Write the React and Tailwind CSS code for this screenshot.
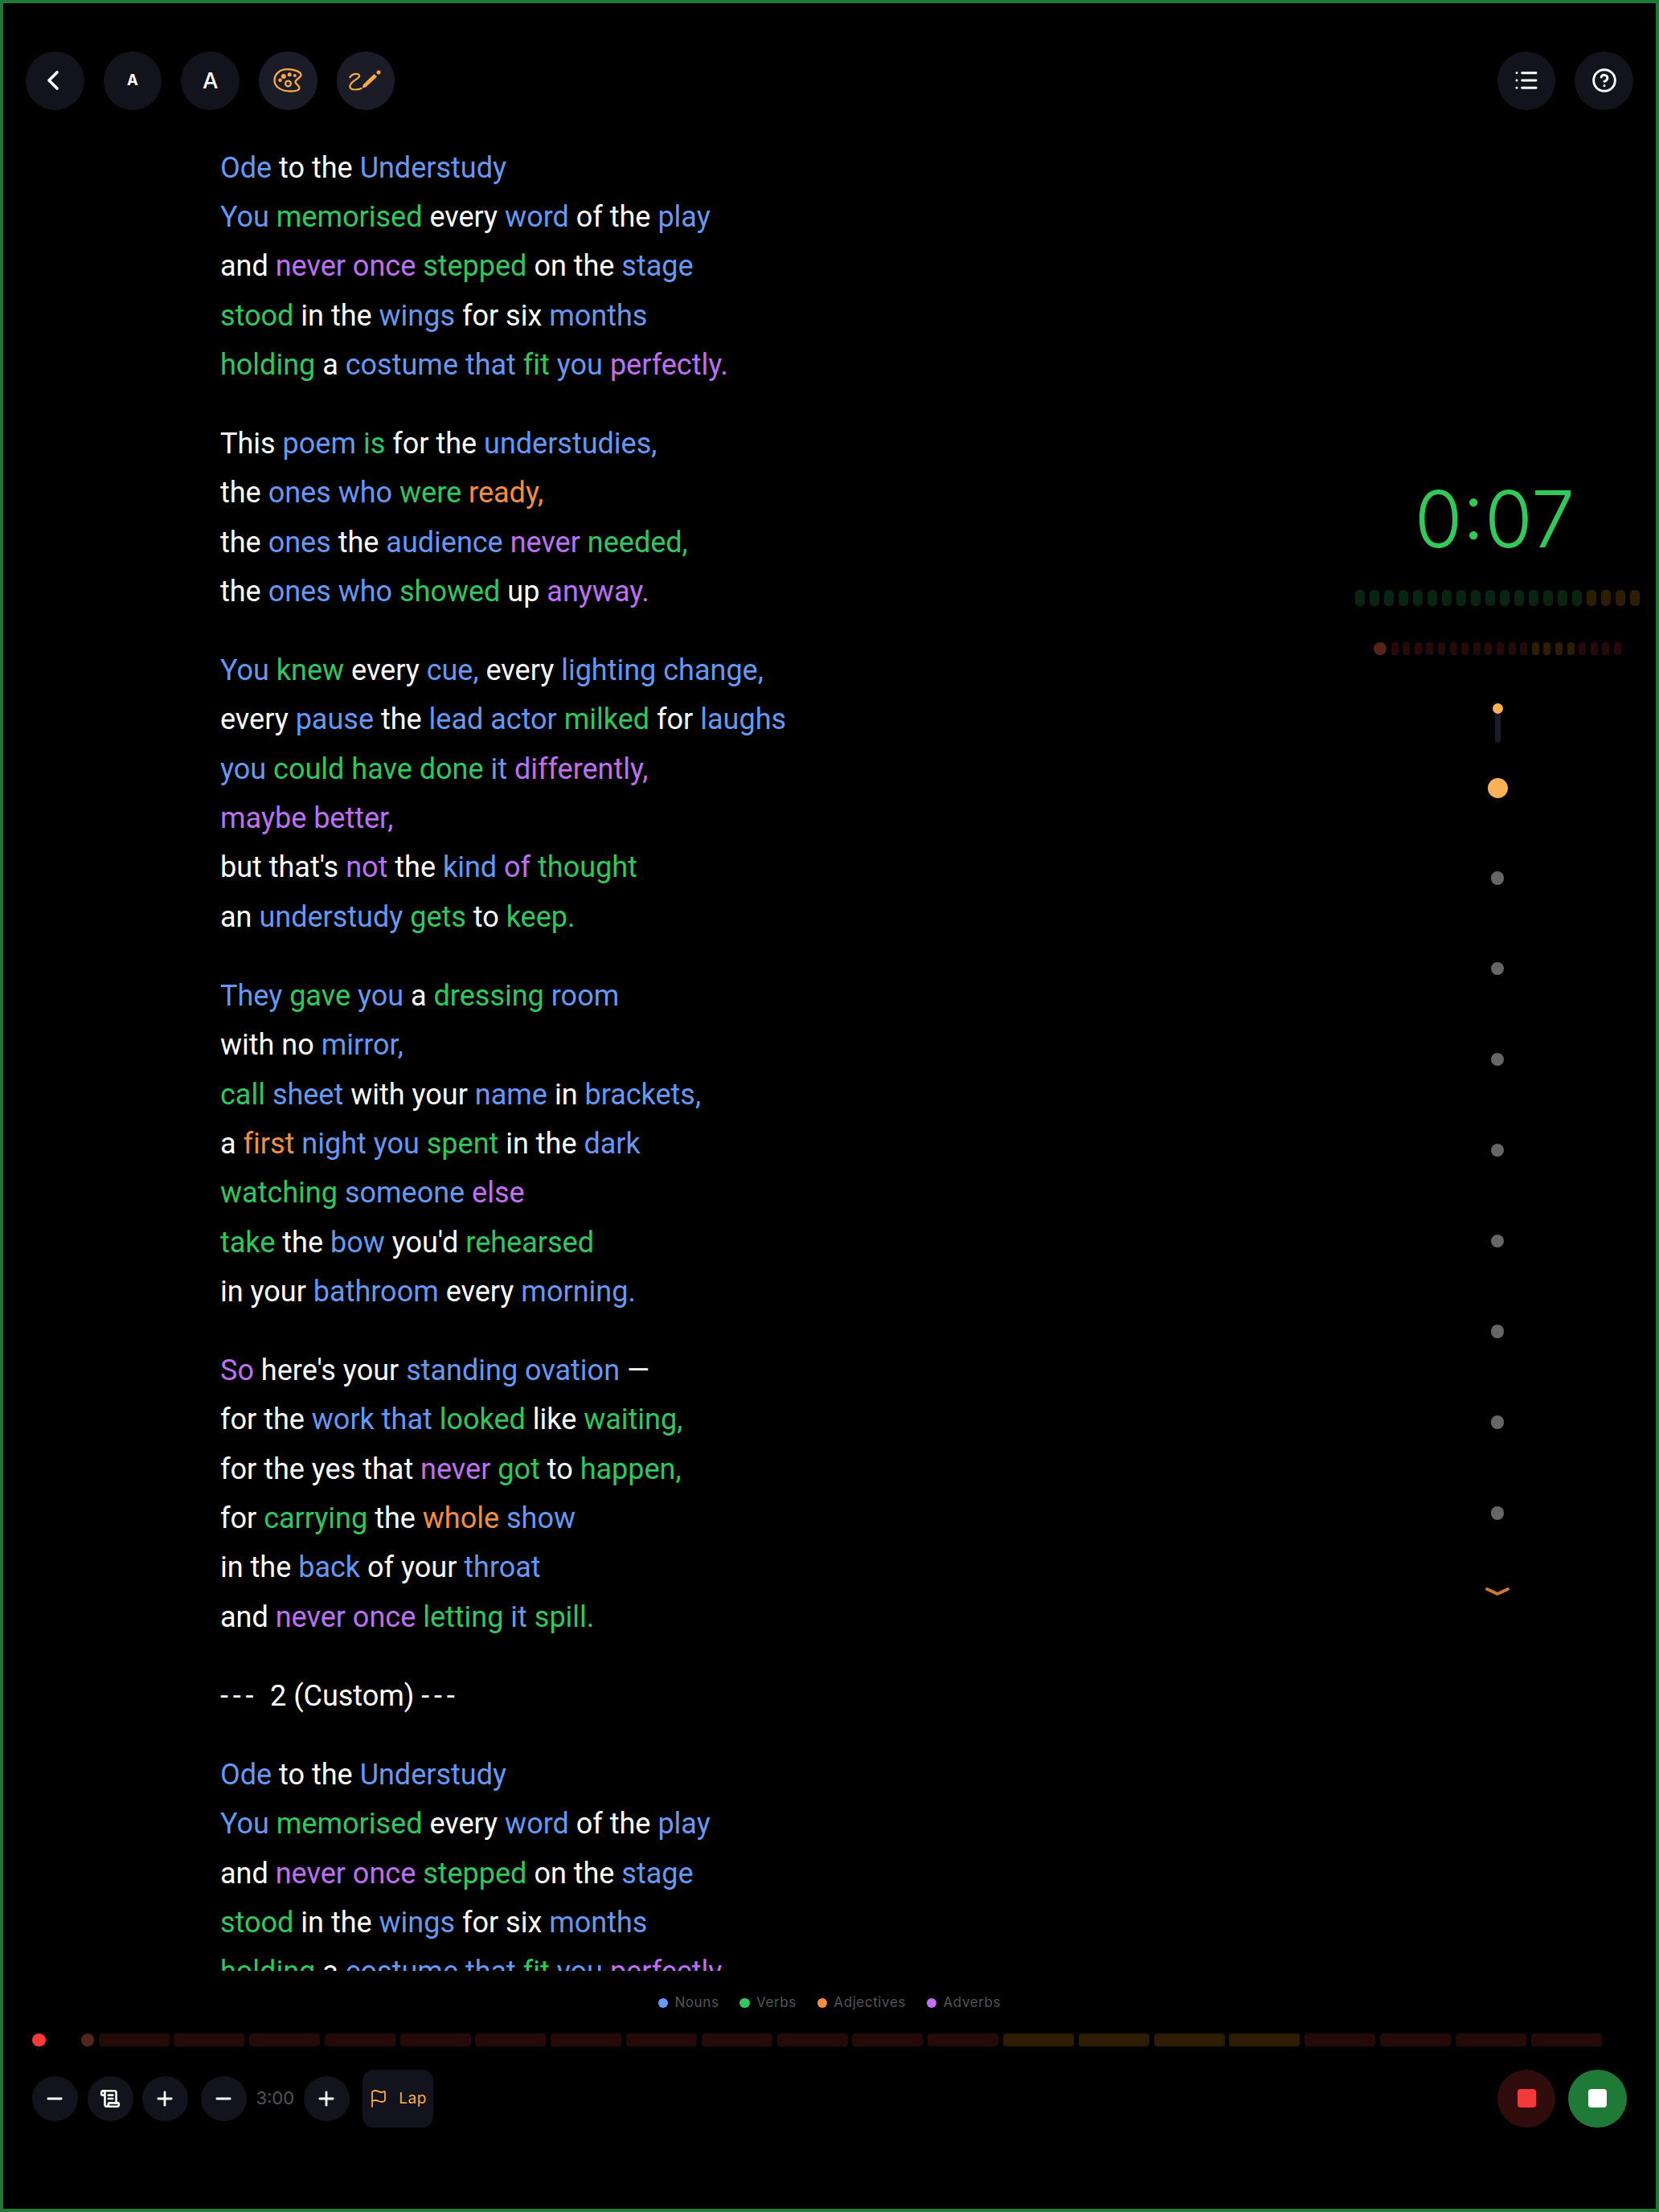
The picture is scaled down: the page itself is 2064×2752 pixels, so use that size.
import React from 'react';
import { ChevronLeft, List, CircleHelp, Minus, Plus, ScrollText, Flag } from 'lucide-react';

const n = 'text-[#6699f5]', v = 'text-[#30c85c]', a = 'text-[#f58e3f]', d = 'text-[#bf70f2]', w = 'text-white', h = 'text-white tracking-[5.800px]';
const C = { n, v, a, d, w, h };
const poem = `n:Ode w:to the n:Understudy
n:You v:memorised w:every n:word w:of the n:play
w:and d:never once v:stepped w:on the n:stage
v:stood w:in the n:wings w:for six n:months
v:holding w:a n:costume that v:fit n:you d:perfectly.

w:This n:poem v:is w:for the n:understudies,
w:the n:ones who v:were a:ready,
w:the n:ones w:the n:audience d:never v:needed,
w:the n:ones who v:showed w:up d:anyway.

n:You v:knew w:every n:cue, w:every n:lighting change,
w:every n:pause w:the n:lead actor v:milked w:for n:laughs
n:you v:could have done n:it d:differently,
d:maybe better,
w:but that's d:not w:the n:kind d:of v:thought
w:an n:understudy v:gets w:to v:keep.

n:They v:gave n:you w:a v:dressing n:room
w:with no n:mirror,
v:call n:sheet w:with your n:name w:in n:brackets,
w:a a:first n:night you v:spent w:in the n:dark
v:watching n:someone d:else
v:take w:the n:bow w:you'd v:rehearsed
w:in your n:bathroom w:every n:morning.

d:So w:here's your n:standing ovation w:—
w:for the n:work that v:looked w:like v:waiting,
w:for the yes that d:never v:got w:to v:happen,
w:for v:carrying w:the a:whole n:show
w:in the n:back w:of your n:throat
w:and d:never once v:letting n:it v:spill.

h:--- w:2 (Custom) h:---

n:Ode w:to the n:Understudy
n:You v:memorised w:every n:word w:of the n:play
w:and d:never once v:stepped w:on the n:stage
v:stood w:in the n:wings w:for six n:months
v:holding w:a n:costume that v:fit n:you d:perfectly.`;

const stanzas = poem.split('\n\n').map(s => s.split('\n').map(l => {
  const parts = [];
  l.split(/ (?=[nvadwh]:)/).forEach(p => parts.push([p[0], p.slice(2)]));
  return parts;
}));

function Round({ children, className = 'bg-[#12131c]' }) {
  return <div className={`w-[72.67px] h-[72.67px] rounded-full flex items-center justify-center shrink-0 ${className}`}>{children}</div>;
}
function Small({ children }) {
  return <div className="w-[56.500px] h-[56.500px] rounded-full bg-[#12131c] flex items-center justify-center shrink-0 text-white">{children}</div>;
}

const Palette = () => (
  <svg width="36" height="30" viewBox="-0.5 0 36 30" fill="none" stroke="#f9ab48" strokeWidth="2.300">
    <path d="M1 15C1 6 9 1.200 17 1.200 25 1.200 34 4 34 8.500 34 12 27 13 27 17 27 20 32 21 32 24.500 32 27.500 27 28.500 21 28.500 11 28.500 1 24 1 15z" />
    <circle cx="18" cy="19" r="3.400" />
    <circle cx="8" cy="14.700" r="2.300" fill="#f9ab48" stroke="none" />
    <circle cx="12.300" cy="10" r="3" fill="#f9ab48" stroke="none" />
    <circle cx="19.700" cy="7.700" r="2.500" fill="#f9ab48" stroke="none" />
    <circle cx="26.300" cy="9" r="2" fill="#f9ab48" stroke="none" />
  </svg>
);
const Sign = () => (
  <svg width="41" height="26" viewBox="0 0 41 26" fill="none" stroke="#f9ab48" strokeWidth="2.200" strokeLinecap="round" strokeLinejoin="round">
    <path d="M1.500 9C4 5.500 8 4.500 10.500 5 13 5.500 14 7.500 12 9.500 9 12.500 2.500 15 1.500 19.500 .8 23 3.500 24.500 8 24.500 11 24.500 13.500 24 15.500 23" />
    <path d="M16.500 22.500L18 18 31.500 5 35 8.500 21 21.500z" fill="#f9ab48" stroke="none" />
    <circle cx="37" cy="3" r="2.500" fill="#f9ab48" stroke="none" />
  </svg>
);

export default function App() {
  const seg1 = Array.from({ length: 20 }, (_, i) => i >= 16);
  return (
    <div className="w-[2064px] h-[2752px] bg-black border-4 border-[#1f7a38] flex flex-col overflow-hidden font-['Inter',sans-serif]">
      <div className="flex justify-between items-start pt-[60px] pl-[28px] pr-[28px] h-[166px] shrink-0">
        <div className="flex gap-[24px]">
          <Round><ChevronLeft size={40} color="#fff" strokeWidth={2.2} className="-ml-1" /></Round>
          <Round><span className="text-white text-[18.500px] font-bold">A</span></Round>
          <Round><span className="text-white text-[27.500px] font-medium">A</span></Round>
          <Round className="bg-[#1c1c28]"><Palette /></Round>
          <Round className="bg-[#1c1c28]"><Sign /></Round>
        </div>
        <div className="flex gap-[24px]">
          <Round><List size={32} color="#fff" strokeWidth={2.2} /></Round>
          <Round><CircleHelp size={32} color="#fff" strokeWidth={2.2} /></Round>
        </div>
      </div>

      <div className="flex h-[2282px] shrink-0 overflow-hidden">
        <div className="w-[1680px] pl-[270px] pt-[8.500px] h-full overflow-hidden shrink-0 font-['Roboto',sans-serif] [font-variant-ligatures:none] text-[36px] leading-[61.350px] text-white">
          {stanzas.map((st, i) => (
            <div key={i} className="mb-[36.750px]">
              {st.map((l, j) => (
                <div key={j} className="whitespace-nowrap h-[61.350px]">
                  {l.map((p, k) => <span key={k} className={C[p[0]]}>{p[1]}{k < l.length - 1 ? ' ' : ''}</span>)}
                </div>
              ))}
            </div>
          ))}
        </div>
        <div className="flex-1 flex flex-col items-center pt-[417px] pr-[18px]">
          <div className="text-[#34c759] text-[97px] leading-[117px] font-light text-center w-full h-[117px] pr-[7px]">0:07</div>
          <div className="flex gap-[6px] mt-[30px]">
            {seg1.map((amb, i) => <div key={i} className={`w-[12px] h-[20px] rounded-[5px] ${amb ? 'bg-[#2e1d05]' : 'bg-[#0a2412]'}`} />)}
          </div>
          <div className="flex items-center gap-[5.600px] mt-[45px]">
            <div className="w-[16px] h-[16px] rounded-full bg-[#54241a]" />
            {Array.from({ length: 20 }, (_, i) => <div key={i} className={`w-[9px] h-[16px] rounded-[4px] ${i >= 12 && i < 16 ? 'bg-[#2e1d05]' : 'bg-[#260a0a]'}`} />)}
          </div>
          <div className="flex flex-col items-center mt-[60px]">
            <div className="w-[13px] h-[13px] rounded-full bg-[#fdb157]" />
            <div className="w-[7px] h-[36px] rounded-b-full bg-[#1c1c28]" />
            <div className="w-[25px] h-[25px] rounded-full bg-[#fdb157] mt-[44px]" />
            <div className="flex flex-col items-center gap-[96.400px] mt-[91px]">
              {Array.from({ length: 8 }, (_, i) => <div key={i} className="w-[16.500px] h-[16.500px] rounded-full bg-[#666666]" />)}
            </div>
            <svg className="mt-[83px]" width="32" height="12" viewBox="0 0 32 12" fill="none" stroke="#c97b32" strokeWidth="4" strokeLinecap="round" strokeLinejoin="round"><path d="M3 3l13 6 13-6" /></svg>
          </div>
        </div>
      </div>

      <div className="flex justify-center items-center h-[26px] gap-[26px] mt-[27px] shrink-0 text-[17px] tracking-[0.6px] text-[#555555]">
        {[['Nouns', 'bg-[#6699ff]'], ['Verbs', 'bg-[#30c85c]'], ['Adjectives', 'bg-[#f58e3f]'], ['Adverbs', 'bg-[#bf70f2]']].map(([t, c]) => (
          <div key={t} className="flex items-center gap-[8px]"><div className={`w-[12.500px] h-[12.500px] rounded-full ${c}`} />{t}</div>
        ))}
      </div>

      <div className="flex items-center h-[17px] mt-[24.500px] pl-[36px] shrink-0">
        <div className="w-[16.500px] h-[16.500px] rounded-full bg-[#f23a3a] mr-[44px]" />
        <div className="w-[16.500px] h-[16.500px] rounded-full bg-[#54241a] mr-[5.500px]" />
        <div className="flex gap-[5.800px]">
          {Array.from({ length: 20 }, (_, i) => <div key={i} className={`w-[88px] h-[16.700px] rounded-[4px] ${i >= 12 && i < 16 ? 'bg-[#2e1d05]' : 'bg-[#260a0a]'}`} />)}
        </div>
      </div>

      <div className="flex items-center justify-between mt-[28px] pl-[36px] pr-[36px] shrink-0">
        <div className="flex items-center">
          <Small><Minus size={28} strokeWidth={2.4} /></Small>
          <div className="w-[12.500px]" />
          <Small><ScrollText size={26} strokeWidth={2.4} /></Small>
          <div className="w-[11.500px]" />
          <Small><Plus size={28} strokeWidth={2.4} /></Small>
          <div className="w-[16.500px]" />
          <Small><Minus size={28} strokeWidth={2.4} /></Small>
          <span className="w-[71.500px] text-center text-[#555555] text-[22px]">3:00</span>
          <Small><Plus size={28} strokeWidth={2.4} /></Small>
          <div className="ml-[16.500px] w-[88px] h-[72px] rounded-[14px] bg-[#12131c] flex items-center justify-center gap-[13px] text-[#f9ab48] text-[19px] tracking-[0.5px]">
            <Flag size={24} strokeWidth={1.8} />Lap
          </div>
        </div>
        <div className="flex gap-[16px] pr-[0px]">
          <Round className="bg-[#300c0c]"><div className="w-[23px] h-[23px] rounded-[4px] bg-[#f23a3a]" /></Round>
          <Round className="bg-[#1f7a38]"><div className="w-[23px] h-[23px] rounded-[4px] bg-white" /></Round>
        </div>
      </div>
    </div>
  );
}
